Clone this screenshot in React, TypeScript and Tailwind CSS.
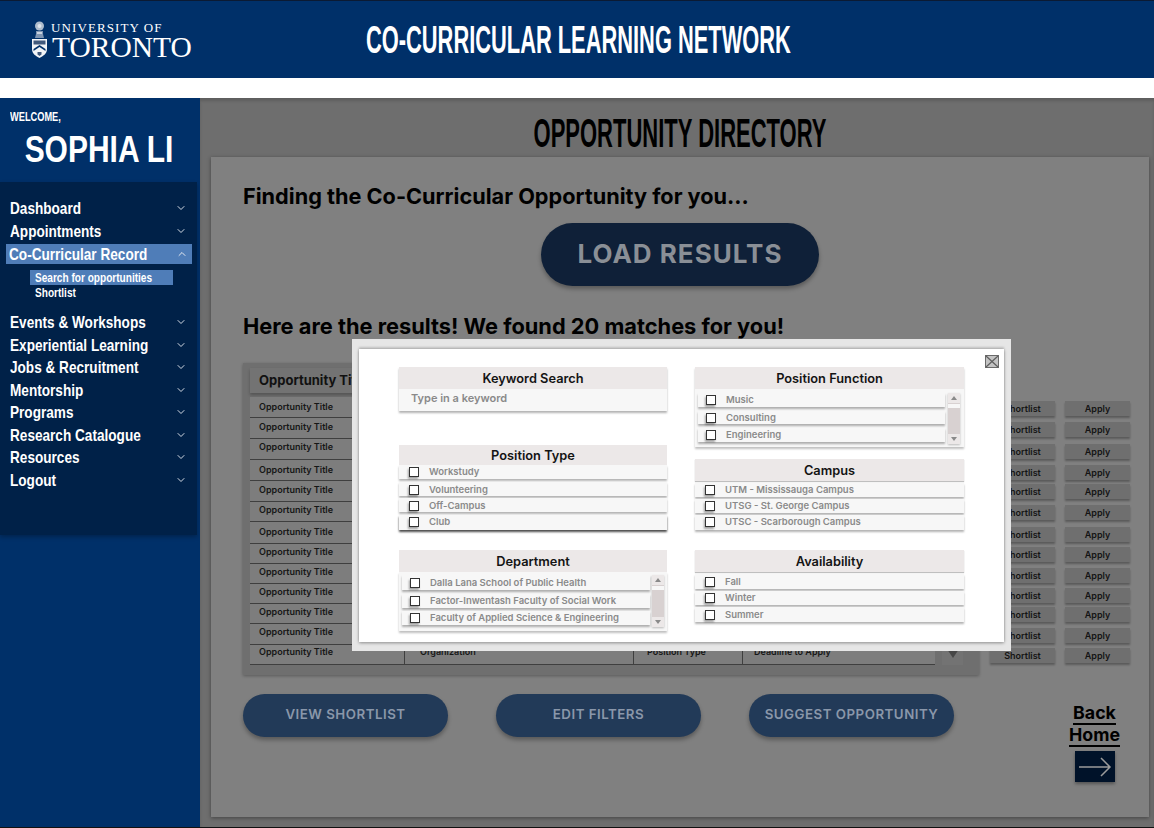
import { ChevronDown, ChevronUp } from 'lucide-react';

const NARROW = "font-['Liberation_Sans',sans-serif]";

const navTop = ['Dashboard', 'Appointments'];
const navBottom = [
  'Events & Workshops',
  'Experiential Learning',
  'Jobs & Recruitment',
  'Mentorship',
  'Programs',
  'Research Catalogue',
  'Resources',
  'Logout',
];

// row height + how far the text sits from the row top, the mockup is not regular
const rows = [
  { h: 'h-[21px]', pt: 'pt-[4px]' },
  { h: 'h-[21px]', pt: 'pt-[3px]' },
  { h: 'h-[21px]', pt: 'pt-[2px]' },
  { h: 'h-[21px]', pt: 'pt-[4px]' },
  { h: 'h-[21px]', pt: 'pt-[3px]' },
  { h: 'h-[20px]', pt: 'pt-[2px]' },
  { h: 'h-[22px]', pt: 'pt-[4px]' },
  { h: 'h-[20px]', pt: 'pt-[2px]' },
  { h: 'h-[20px]', pt: 'pt-[2px]' },
  { h: 'h-[20px]', pt: 'pt-[2px]' },
  { h: 'h-[20px]', pt: 'pt-[2px]' },
  { h: 'h-[21px]', pt: 'pt-[2px]' },
  { h: 'h-[20px]', pt: 'pt-[1px]' },
];

const actionGaps = [
  'mt-0', 'mt-[6px]', 'mt-[7px]', 'mt-[6px]', 'mt-[4px]', 'mt-[6px]', 'mt-[7px]',
  'mt-[5px]', 'mt-[6px]', 'mt-[5px]', 'mt-[4px]', 'mt-[6px]', 'mt-[5px]',
];

const Crest = () => (
  <svg width="17" height="38" viewBox="0 0 17 38" className="shrink-0">
    <circle cx="8.5" cy="5" r="4.500" fill="#aebccd" />
    <circle cx="8.5" cy="5" r="2" fill="#dfe5ec" />
    <path d="M5 10h7v3l1 4H4l1-4z" fill="#7f95b2" />
    <path d="M6 11h5v2H6z" fill="#c9d3e0" />
    <path d="M1 18h15v10c0 5-4 7-7.500 9C5 35 1 33 1 28z" fill="#f2f4f7" />
    <path d="M2.500 19.500h12v4h-12z" fill="#41597c" />
    <path d="M2.500 28l6-4 6 4v2l-6-4-6 4z" fill="#003069" />
    <path d="M6.500 31h4v2.500l-2 1.500-2-1.500z" fill="#41597c" />
  </svg>
);

const NavRow = ({ label }: { label: string }) => (
  <div className="h-[22.500px] flex items-center pl-[10px] pr-[10px]">
    <span className="flex-1 min-w-0">
      <span className={`${NARROW} inline-block origin-left scale-x-[0.8] whitespace-nowrap text-[17px] font-bold text-white leading-none`}>
        {label}
      </span>
    </span>
    <ChevronDown size={12} strokeWidth={2} className="text-[#d5dbe4]" />
  </div>
);

const Sidebar = () => (
  <aside className="w-[200px] shrink-0 bg-[#003069] flex flex-col">
    <div className={`${NARROW} h-[84px] pl-[10px] pt-[12px] text-white`}>
      <p className="origin-left scale-x-[0.77] whitespace-nowrap text-[12px] font-bold leading-[15px]">WELCOME,</p>
      <p className="w-[154px] text-center scale-x-[0.81] whitespace-nowrap text-[37px] font-bold leading-[42px] mt-[4px]">
        SOPHIA LI
      </p>
    </div>
    <nav className="w-[197px] h-[353px] bg-[#002148] shadow-[0_2px_4px_rgba(0,0,0,0.25)] pt-[15px]">
      {navTop.map((n) => (
        <NavRow key={n} label={n} />
      ))}
      <div className="ml-[6px] mr-[5px] h-[20px] mt-[2px] bg-[#4f7db8] flex items-center pl-[3px] pr-[4px]">
        <span className="flex-1 min-w-0">
          <span className={`${NARROW} inline-block origin-left scale-x-[0.8] whitespace-nowrap text-[17px] font-bold text-white leading-none`}>
            Co-Curricular Record
          </span>
        </span>
        <ChevronUp size={12} strokeWidth={2} className="text-[#e3e8ef]" />
      </div>
      <div className="ml-[30px] w-[143px] h-[15px] mt-[6px] bg-[#4f7db8] pl-[5px] flex items-center">
        <span className={`${NARROW} inline-block origin-left scale-x-[0.84] whitespace-nowrap text-[12px] font-bold text-white leading-none`}>
          Search for opportunities
        </span>
      </div>
      <p className={`${NARROW} ml-[35px] mb-[10px] origin-left scale-x-[0.84] whitespace-nowrap text-[12px] font-bold text-white leading-[16px]`}>
        Shortlist
      </p>
      {navBottom.map((n) => (
        <NavRow key={n} label={n} />
      ))}
    </nav>
  </aside>
);

const Table = () => (
  <div className="w-[736px] h-[312px] bg-[#6f6f6f] shadow-[0_1px_3px_rgba(0,0,0,0.3)] pt-[5px] pl-[7px] flex gap-[7px]">
    <div className="w-[685px]">
      <div className="h-[25px] mb-[4px] bg-[#737373] shadow-[0_2px_3px_rgba(0,0,0,0.25)] flex items-center pl-[9px] text-[13px] font-bold text-[#111] font-['Inter',sans-serif]">
        Opportunity Title
      </div>
      {rows.map((r, i) => {
        // every other cell of these rows is under the filter dialog
        const last = i === rows.length - 1;
        return (
          <div
            key={i}
            className={`${r.h} bg-[#7d7d7d] border-b border-[#3f3f3f] flex text-[9px] leading-[11px] font-semibold text-[#161616] font-['Inter',sans-serif]`}
          >
            <span className={`w-[154px] pl-[9px] ${r.pt}`}>Opportunity Title</span>
            <span className={`w-[229px] pl-[15px] border-l border-[#3f3f3f] ${r.pt}`}>{last && 'Organization'}</span>
            <span className={`w-[109px] pl-[13px] border-l border-[#3f3f3f] ${r.pt}`}>{last && 'Position Type'}</span>
            <span className={`pl-[11px] border-l border-[#3f3f3f] ${r.pt}`}>{last && 'Deadline to Apply'}</span>
          </div>
        );
      })}
    </div>
    <div className="w-[21px] h-[297px] bg-[#737373] flex flex-col justify-end items-center pb-[7px]">
      <svg width="12" height="9" viewBox="0 0 12 9">
        <path d="M0 0h12L6 9z" fill="#474747" />
      </svg>
    </div>
  </div>
);

const Actions = () => (
  <div className="ml-[11px] pt-[38px] flex flex-col">
    {actionGaps.map((g, i) => (
      <div key={i} className={`${g} flex gap-[10px]`}>
        {['Shortlist', 'Apply'].map((t) => (
          <div
            key={t}
            className="w-[65px] h-[15px] bg-[#6f6f6f] shadow-[0_2px_2px_rgba(0,0,0,0.3)] flex items-center justify-center text-[9px] font-semibold text-[#141414] font-['Inter',sans-serif]"
          >
            {t}
          </div>
        ))}
      </div>
    ))}
  </div>
);

const Pill = ({ label }: { label: string }) => (
  <button className="w-[205px] h-[43px] pb-[2px] rounded-full bg-[#223a58] shadow-[0_3px_4px_rgba(0,0,0,0.3)] text-[13.300px] font-semibold tracking-[0.5px] text-[#8a97aa] font-['Inter',sans-serif]">
    {label}
  </button>
);

const Check = () => (
  <span className="w-[10px] h-[10px] shrink-0 bg-white border-[1.500px] border-[#333] shadow-[-1px_2px_2px_rgba(0,0,0,0.35)]" />
);

const Item = ({ label, pad, cls }: { label: string; pad: string; cls: string }) => (
  <div className={`${cls} bg-[#f7f7f7] shadow-[0_2px_2px_rgba(0,0,0,0.3)] flex items-center ${pad}`}>
    <Check />
    <span className="ml-[10px] text-[9.500px] font-semibold text-[#8a8a8a] leading-none">{label}</span>
  </div>
);

const SecHead = ({ title, cls }: { title: string; cls: string }) => (
  <div className={`${cls} bg-[#ece8e8] flex items-center justify-center text-[12.800px] font-semibold text-[#141414]`}>
    {title}
  </div>
);

const ScrollStrip = () => (
  <div className="w-[12px] bg-[#d8d1d1] flex flex-col items-center justify-between shadow-[0_1px_2px_rgba(0,0,0,0.25)]">
    <div className="w-full">
      <div className="h-[10px] bg-[#ece8e8] flex items-center justify-center">
        <svg width="6" height="4" viewBox="0 0 6 4"><path d="M0 4h6L3 0z" fill="#8a8a8a" /></svg>
      </div>
      <div className="h-[4px] mt-[1px] bg-[#f7f7f7]" />
    </div>
    <div className="h-[10px] bg-[#ece8e8] w-full flex items-center justify-center">
      <svg width="6" height="4" viewBox="0 0 6 4"><path d="M0 0h6L3 4z" fill="#8a8a8a" /></svg>
    </div>
  </div>
);

const Modal = () => (
  <div className="absolute left-[352px] top-[339px] w-[659px] h-[312px] bg-[#e6e6e6] pt-[10px] px-[7px] font-['Inter',sans-serif]">
    <div className="relative w-[645px] h-[293px] bg-white shadow-[0_-2px_2px_rgba(0,0,0,0.15),0_1px_3px_rgba(0,0,0,0.4)] pl-[40px] pt-[18px] flex gap-[28px]">
      <svg width="14" height="13" viewBox="0 0 14 13" className="absolute left-[626px] top-[6px]">
        <rect x="0.500" y="0.500" width="13" height="12" fill="#c4c4c4" stroke="#6a6a6a" />
        <path d="M1 1l12 11M13 1L1 12" stroke="#5f5f5f" strokeWidth="1.200" />
      </svg>

      <div className="w-[268px] flex flex-col">
        <div className="shadow-[0_2px_2px_rgba(0,0,0,0.3)]">
          <SecHead title="Keyword Search" cls="h-[22px] pt-[1px]" />
          <div className="h-[22px] pb-[4px] bg-[#f7f7f7] pl-[12px] flex items-center text-[11px] font-semibold text-[#8a8a8a]">
            Type in a keyword
          </div>
        </div>

        <SecHead title="Position Type" cls="h-[20px] mt-[34px] pt-[2px]" />
        <div className="flex flex-col">
          <Item label="Workstudy" pad="pl-[10px] pb-[1px]" cls="h-[14px]" />
          <Item label="Volunteering" pad="pl-[10px] pt-[1px]" cls="h-[14px] mt-[3px]" />
          <Item label="Off-Campus" pad="pl-[10px] pt-[1px]" cls="h-[14px] mt-[2px]" />
          <Item label="Club" pad="pl-[10px] pb-[1px] shadow-[0_2px_2px_rgba(0,0,0,0.7)]" cls="h-[15px] mt-[3px]" />
        </div>

        <SecHead title="Department" cls="h-[22px] mt-[20px] pt-[1px]" />
        <div className="h-[59px] bg-[#f7f7f7] shadow-[0_2px_2px_rgba(0,0,0,0.25)] pl-[3px] pr-[3px] pt-[3px] pb-[4px] flex gap-[2px]">
          <div className="flex-1 flex flex-col gap-[3.500px]">
            <Item label="Dalla Lana School of Public Health" pad="pl-[8px]" cls="h-[15px]" />
            <Item label="Factor-Inwentash Faculty of Social Work" pad="pl-[8px]" cls="h-[14px]" />
            <Item label="Faculty of Applied Science & Engineering" pad="pl-[8px]" cls="h-[14px]" />
          </div>
          <ScrollStrip />
        </div>
      </div>

      <div className="w-[269px] flex flex-col">
        <SecHead title="Position Function" cls="h-[22px] pt-[2px] shadow-[0_2px_2px_rgba(0,0,0,0.25)]" />
        <div className="h-[58px] bg-[#f7f7f7] shadow-[0_2px_2px_rgba(0,0,0,0.25)] pl-[3px] pr-[4px] pt-[4px] pb-[3px] flex gap-[3px]">
          <div className="flex-1 flex flex-col gap-[4px]">
            <Item label="Music" pad="pl-[8px]" cls="h-[14px]" />
            <Item label="Consulting" pad="pl-[8px]" cls="h-[13px]" />
            <Item label="Engineering" pad="pl-[8px]" cls="h-[14px]" />
          </div>
          <ScrollStrip />
        </div>

        <SecHead title="Campus" cls="h-[22px] mt-[12px] pt-[2px] shadow-[0_1px_1px_rgba(0,0,0,0.25)]" />
        <div className="flex flex-col gap-[2px] mt-[2px]">
          <Item label="UTM - Mississauga Campus" pad="pl-[10px]" cls="h-[14px]" />
          <Item label="UTSG - St. George Campus" pad="pl-[10px]" cls="h-[14px]" />
          <Item label="UTSC - Scarborough Campus" pad="pl-[10px] pb-[1px]" cls="h-[15px]" />
        </div>

        <SecHead title="Availability" cls="h-[22px] mt-[20px] pt-[2px] shadow-[0_1px_1px_rgba(0,0,0,0.25)]" />
        <div className="flex flex-col gap-[2px] mt-[2px]">
          <Item label="Fall" pad="pl-[10px]" cls="h-[15px]" />
          <Item label="Winter" pad="pl-[10px]" cls="h-[14px]" />
          <Item label="Summer" pad="pl-[10px]" cls="h-[15px]" />
        </div>
      </div>
    </div>
  </div>
);

export default function App() {
  return (
    <div className="relative w-[1154px] h-[828px] overflow-hidden bg-white flex flex-col border-b border-[#111]">
      <header className="h-[78px] shrink-0 bg-[#003069] border-t border-[#0b1a33] flex items-center pl-[31px]">
        <Crest />
        <div className="ml-[3px] w-[141px] font-['Liberation_Serif',serif] text-white">
          <p className="text-[13px] leading-[14px] tracking-[1.100px]">UNIVERSITY OF</p>
          <p className="text-[29.500px] leading-[24px] pl-[1px] whitespace-nowrap">TORONTO</p>
        </div>
        <h1 className={`${NARROW} ml-[174px] origin-left scale-x-[0.575] whitespace-nowrap text-[38px] font-bold text-white leading-none`}>
          CO-CURRICULAR LEARNING NETWORK
        </h1>
      </header>
      <div className="h-[20px] shrink-0 bg-white" />

      <div className="flex-1 flex min-h-0">
        <Sidebar />
        <main className="flex-1 bg-[#6e6e6e] shadow-[inset_0_3px_3px_rgba(0,0,0,0.15)] pl-[11px] pr-[5px] flex flex-col">
          <h2 className={`${NARROW} h-[59px] pt-[11px] flex items-center justify-center scale-x-[0.55] whitespace-nowrap text-[40px] font-bold text-black leading-none`}>
            OPPORTUNITY DIRECTORY
          </h2>
          <section className="h-[660px] bg-[#808080] shadow-[0_1px_4px_rgba(0,0,0,0.4)] pl-[32px] pt-[25px] font-['Inter',sans-serif]">
            <h3 className="text-[21.700px] font-bold text-black leading-[28px]">
              Finding the Co-Curricular Opportunity for you...
            </h3>
            <div className="mt-[13px] pl-[298px]">
              <button className="w-[278px] h-[63px] pb-[2px] rounded-full bg-[#0f2038] shadow-[0_3px_4px_rgba(0,0,0,0.3)] text-[26px] font-bold tracking-[1px] text-[#8a8f96]">
                LOAD RESULTS
              </button>
            </div>
            <h3 className="mt-[26px] text-[21.800px] font-bold text-black leading-[28px]">
              Here are the results! We found 20 matches for you!
            </h3>
            <div className="mt-[23px] flex items-start">
              <Table />
              <Actions />
            </div>
            <div className="mt-[19px] flex items-start">
              <div className="flex gap-[48px]">
                <Pill label="VIEW SHORTLIST" />
                <Pill label="EDIT FILTERS" />
                <Pill label="SUGGEST OPPORTUNITY" />
              </div>
              <div className="ml-[115px] w-[51px] flex flex-col items-center text-[17.800px] font-bold text-black leading-[19px] pt-[9px]">
                <span className="border-b-2 border-black pb-[1px]">Back</span>
                <span className="border-b-2 border-black pb-[1px]">Home</span>
                <div className="mt-[4px] w-[40px] h-[31px] bg-[#001229] shadow-[0_2px_3px_rgba(0,0,0,0.35)] flex items-center justify-center">
                  <svg width="34" height="20" viewBox="0 0 34 20" fill="none" stroke="#9a9a9a" strokeWidth="1.500">
                    <path d="M1 10h31M23 1l9 9-9 9" />
                  </svg>
                </div>
              </div>
            </div>
          </section>
        </main>
      </div>

      <Modal />
    </div>
  );
}
